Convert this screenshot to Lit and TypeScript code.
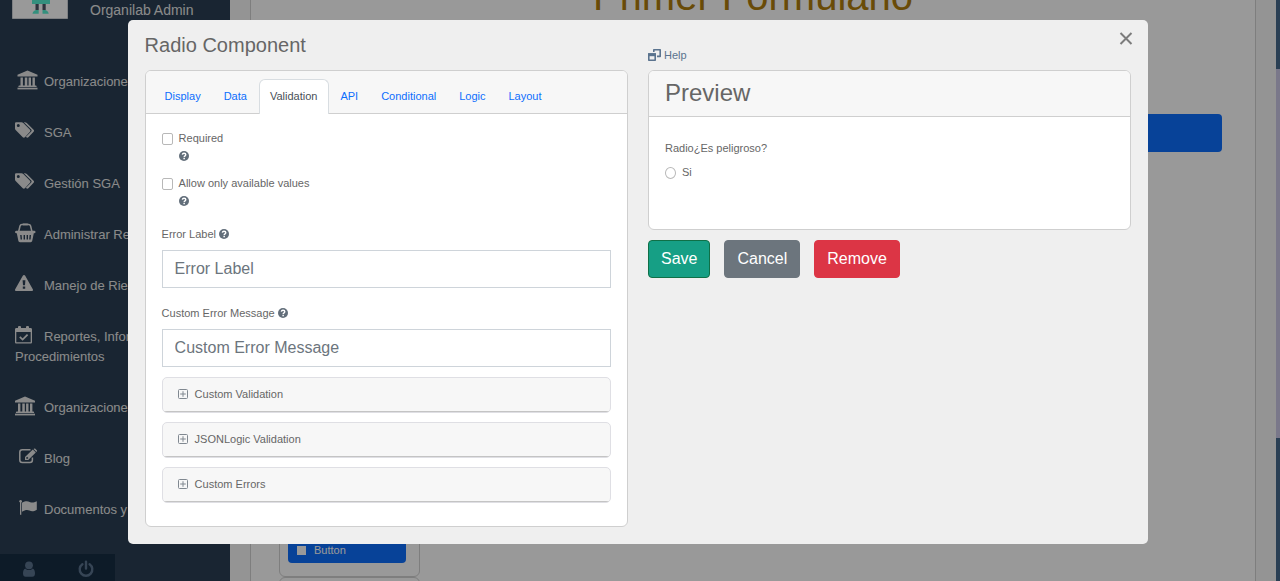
import { LitElement, html, svg, css } from "lit";
import { customElement, property } from "lit/decorators.js";
import { classMap } from "lit/directives/class-map.js";

const bank = svg`<path d="M10-.6 20 3.800V5.500H0V3.800Z"/><path d="M3 6.500h2.400v8.100h1.900V6.500h2.500v8.100h1.300V6.500h2.400v8.100h1.500V6.500H17.400v8.100h.9c.5 0 .8.4.8.9v.6H.9v-.6c0-.5.4-.9.9-.9H3Z"/><path d="M0 16.700h20v1.700H0Z"/>`;

const icons = {
  bank: svg`<g>${bank}</g>`,
  bankWide: svg`<g transform="translate(2.5 0)">${bank}</g>`,
  tags: svg`<path fill-rule="evenodd" d="M0 1.4C0 .7.6.2 1.3.2H6.4c.7 0 1.400.300 1.900.8l6.700 6.700c.6.6.6 1.500 0 2.100L9.900 15.200c-.6.6-1.500.6-2.100 0L.9 8.300C.4 7.800 0 7.100 0 6.400ZM3.300 2a1.500 1.500 0 1 0 0 3 1.500 1.500 0 0 0 0-3Z"/><path d="M8.800.2h1c.7 0 1.500.300 2 .8l6.800 6.700c.6.6.6 1.500 0 2.100l-5.200 5.400c-.7.7-1.500.6-2.100 0l-.4-.4 5.300-5.300c.5-.6.5-1.400 0-1.900Z"/>`,
  basket: svg`<path fill="none" stroke="currentColor" stroke-width="1.500" d="M3.700 7.500 5 2C5.300.8 6 .6 7 .6h6.600c1 0 1.700.2 2 1.400l1.300 5.500"/><path fill="none" stroke="currentColor" stroke-width="1.800" d="M7.800.4h5"/><path fill-rule="evenodd" d="M1.200 6.800h18.200c1.600 0 1.600 2.500 0 2.500h-.6l-1.500 7.300c-.2 1-.8 1.600-1.700 1.600H5c-.9 0-1.500-.6-1.700-1.600L1.800 9.300h-.6c-1.600 0-1.600-2.500 0-2.500ZM5.200 11l.4 4.500H7L6.600 11Zm3.400 0v4.500H10V11Zm3 0v4.500h1.400V11Zm3 0-.4 4.500h1.400l.4-4.500Z"/>`,
  warning: svg`<path fill-rule="evenodd" d="M9 0c.6 0 .9.200 1.200.7l7.600 13.600c.5.9-.1 1.700-1 1.700H1.200c-.9 0-1.500-.8-1-1.700L7.800.7C8.100.2 8.400 0 9 0ZM7.600 5.300 8 10.200h2l.4-4.900ZM7.800 11.500v2.200h2.400v-2.200Z"/>`,
  calendar: svg`<path fill-rule="evenodd" d="M1.400 2H3V.8C3-.2 6-.2 6 .8V2h5V.8c0-1 3-1 3 0V2h1.600c.8 0 1.400.6 1.400 1.400v12.800c0 .8-.6 1.400-1.400 1.400H1.400c-.8 0-1.400-.6-1.400-1.400V3.400C0 2.600.6 2 1.400 2ZM1.300 6v10.300h14.400V6Z"/><path fill="none" stroke="currentColor" stroke-width="1.700" d="m4.800 10.800 2.800 2.800 5-5"/>`,
  edit: svg`<path fill="none" stroke="currentColor" stroke-width="1.500" d="M15.500 1.800H7.300c-1.500 0-2.500 1-2.500 2.500v7.600c0 1.500 1 2.500 2.500 2.500h7.600c1.500 0 2.500-1 2.500-2.500V9.500"/><path fill-rule="evenodd" d="M10 9 17.800 1.600 20.800 4.600 13.200 12H10ZM11.300 9.600V10.800H12.700L13.400 10 12.100 8.700Z"/><path d="m18.500 1.100.6-.4c.4-.3.800-.3 1.200 0l1.500 1.500c.4.4.4.800 0 1.200l-.5.6Z"/>`,
  flag: svg`<circle cx="5.600" cy="2.300" r="1.300"/><path d="M5 2h1.300v13.800H5Z"/><path d="M7 3.800c4-2.300 5.500-1.800 8.200-.6 2 .9 4.200.2 6.600-1v8.600c-3.200 1.800-5 2-7.300.8-2.300-1.200-4.500-.6-7.500 1.100Z"/>`,
};

type IconName = keyof typeof icons;

@customElement("help-tip")
export class HelpTip extends LitElement {
  static styles = css`
    :host {
      display: inline-block;
      width: 10px;
      height: 10px;
      vertical-align: -1px;
    }
    .glyph {
      display: block;
      width: 10px;
      height: 10px;
    }
  `;

  render() {
    return html`<svg class="glyph" viewBox="0 0 10 10" role="img" aria-label="?">
      <circle cx="5" cy="5" r="5" fill="#626e7a" />
      <path fill="none" stroke="#fff" stroke-width="1.400" d="M3.300 3.700C3.500 2.700 4.200 2.300 5 2.300c1 0 1.800.6 1.800 1.500C6.800 4.900 5.200 4.800 5.200 6.100" />
      <path fill="#fff" d="M4.400 6.800h1.500v1.400H4.400Z" />
    </svg>`;
  }
}

@customElement("side-nav")
export class SideNav extends LitElement {
  static styles = css`
    :host {
      display: flex;
      flex-direction: column;
      position: relative;
      width: 230px;
      flex: none;
      background: #2a3f54;
      color: #e7e7e7;
      overflow: hidden;
    }
    .profile {
      display: flex;
      gap: 22px;
      padding-left: 12px;
      align-items: flex-start;
    }
    .avatar {
      display: block;
      width: 56px;
      height: 19px;
    }
    .name {
      font-size: 14px;
      line-height: 20px;
    }
    .menu {
      list-style: none;
      margin: 37px 0 0;
      padding: 0;
    }
    .link {
      display: block;
      padding: 15px 15px 16px;
      font-size: 13px;
      line-height: 20px;
      color: inherit;
      text-decoration: none;
    }
    .icon {
      width: 29px;
      height: 18px;
      vertical-align: -4px;
      overflow: visible;
      fill: currentColor;
    }
    .footer {
      position: absolute;
      left: 0;
      bottom: 0;
      display: flex;
      width: 50%;
      background: #172d44;
    }
    .tool {
      flex: 1;
      display: flex;
      justify-content: center;
      padding: 6px 0 3px;
      border: 0;
      background: none;
      color: #5a738e;
    }
    .toolicon {
      width: 18px;
      height: 18px;
      fill: currentColor;
    }
  `;

  private entries: { icon: IconName; label: string }[] = [
    { icon: "bankWide", label: "Organizaciones" },
    { icon: "tags", label: "SGA" },
    { icon: "tags", label: "Gestión SGA" },
    { icon: "basket", label: "Administrar Reactivos" },
    { icon: "warning", label: "Manejo de Riesgos" },
    { icon: "calendar", label: "Reportes, Informes y Procedimientos" },
    { icon: "bank", label: "Organizaciones" },
    { icon: "edit", label: "Blog" },
    { icon: "flag", label: "Documentos y normas" },
  ];

  render() {
    return html`
      <div class="profile">
        <svg class="avatar" viewBox="0 0 56 19" aria-hidden="true">
          <path fill="#fff" stroke="#d3d6da" d="M.5-1V18.500H55.500V-1" />
          <path fill="#58f0d2" d="M20 0H38V4H20Z" />
          <path fill="#4c5666" d="M23.500 4h3.200v6h-3.200ZM30.500 4h3.200v6h-3.200Z" />
          <path fill="#58f0d2" d="M20.500 13.700c0-2 2-3 3.500-3.700h2.700v3.700ZM30.500 10h2.700c1.500.7 3.500 1.700 3.500 3.700h-6.200Z" />
        </svg>
        <span class="name">Organilab Admin</span>
      </div>
      <ul class="menu">
        ${this.entries.map(
          (e) => html`<li><a class="link" href="#"><svg class="icon" viewBox="0 1 29 18" aria-hidden="true">${icons[e.icon]}</svg>${e.label}</a></li>`
        )}
      </ul>
      <div class="footer">
        <button class="tool" aria-label="Perfil">
          <svg class="toolicon" viewBox="0 0 18 18"><circle cx="9" cy="5.300" r="3.900" /><path d="M5.300 8.400C3.500 9.200 3 11.500 3 13.500 3 15.500 4 16.800 5.700 16.800h6.600c1.700 0 2.700-1.300 2.700-3.300 0-2-.5-4.300-2.300-5.100-2 2-5.400 2-7.400 0Z" /></svg>
        </button>
        <button class="tool" aria-label="Salir">
          <svg class="toolicon" viewBox="0 0 18 18"><path fill="none" stroke="currentColor" stroke-width="2.400" stroke-linecap="round" d="M5.400 4.300a6.300 6.300 0 1 0 7.200 0M9 1.600v7" /></svg>
        </button>
      </div>
    `;
  }
}

@customElement("form-builder")
export class FormBuilder extends LitElement {
  static styles = css`
    :host {
      display: block;
      flex: 1;
      min-width: 0;
      padding: 0 20px;
      background: #f7f7f7;
      overflow: hidden;
    }
    .panel {
      min-height: 100%;
      box-sizing: border-box;
      padding: 0 33px 0 28px;
      border: 1px solid #d2d2d2;
      border-width: 0 1px;
      background: #fff;
    }
    .heading {
      margin: -28px -33px 0 -28px;
      text-align: center;
      font-size: 40px;
      font-weight: 400;
      line-height: 48px;
      color: #b07d0c;
    }
    .columns {
      display: flex;
      gap: 20px;
      padding-top: 94px;
      align-items: flex-start;
    }
    .palette {
      width: 141px;
      flex: none;
      box-sizing: border-box;
    }
    .group {
      box-sizing: border-box;
      padding: 8px 13px 13px 8px;
      border: 1px solid #d2d2d2;
      border-radius: 6px;
      height: 463px;
      display: flex;
      align-items: flex-end;
    }
    .component {
      display: flex;
      align-items: center;
      gap: 8px;
      width: 100%;
      height: 26px;
      padding: 0 9px;
      border: 0;
      border-radius: 4px;
      background: #0d6efd;
      color: #fff;
      font: 11px/16px "Liberation Sans", Arial, sans-serif;
    }
    .square {
      width: 9px;
      height: 9px;
      background: #fff;
    }
    .submit {
      flex: 1;
      height: 38px;
      border: 0;
      border-radius: 4px;
      background: #0d6efd;
      color: #fff;
      font: 16px/24px "Liberation Sans", Arial, sans-serif;
    }
  `;

  render() {
    return html`
      <div class="panel">
        <h1 class="heading">Primer Formulario</h1>
        <div class="columns">
          <div class="palette">
            <div class="group">
              <button class="component"><span class="square"></span>Button</button>
            </div>
            <div class="group"></div>
          </div>
          <button class="submit">Submit</button>
        </div>
      </div>
    `;
  }
}

@customElement("component-dialog")
export class ComponentDialog extends LitElement {
  @property() active = "Validation";

  static styles = css`
    :host {
      display: block;
      position: relative;
      box-sizing: border-box;
      width: 80%;
      padding: 13px 17px 17px;
      border-radius: 5px;
      background: #efefef;
      color: #666;
      font-size: 11px;
      line-height: 17px;
    }
    .top,
    .columns {
      display: grid;
      grid-template-columns: 1fr 1fr;
      column-gap: 20px;
    }
    .columns {
      align-items: start;
    }
    .top {
      height: 32px;
      margin-bottom: 5px;
    }
    .title {
      margin: 0;
      font-size: 20px;
      line-height: 24px;
      font-weight: 400;
    }
    .help {
      display: flex;
      align-items: center;
      align-self: end;
      justify-self: start;
      gap: 3px;
      line-height: 20px;
      color: #5a738e;
      text-decoration: none;
    }
    .helpicon {
      width: 13px;
      height: 12px;
    }
    .close {
      position: absolute;
      top: 10px;
      right: 14px;
      padding: 0;
      border: 0;
      background: none;
      width: 16px;
      height: 16px;
    }
    .cross {
      display: block;
      width: 16px;
      height: 16px;
    }
    .card {
      border: 1px solid #cfcfcf;
      border-radius: 6px;
      background: #fff;
      overflow: hidden;
    }
    .tabs {
      display: flex;
      padding: 8px 8px 0;
      border-bottom: 1px solid #cfcfcf;
      background: #f7f7f7;
    }
    .tab {
      margin-bottom: -1px;
      padding: 8px 11px 9px 10px;
      border: 1px solid transparent;
      border-bottom: 0;
      border-radius: 6px 6px 0 0;
      color: #0d6efd;
      text-decoration: none;
    }
    .tab.active {
      border-color: #d8dde1;
      background: #fff;
      color: #495057;
    }
    .body {
      padding: 16px 16px 23px;
    }
    .checks {
      display: grid;
      gap: 11px;
      margin-bottom: 17px;
    }
    .check {
      display: grid;
      grid-template-columns: 11px 1fr;
      column-gap: 6px;
    }
    .check help-tip {
      grid-column: 2;
      margin: 4px 0 3px;
    }
    .box {
      appearance: none;
      box-sizing: border-box;
      flex: none;
      width: 11px;
      height: 12px;
      margin: 3px 0 0;
      border: 1px solid #b8b8b8;
      border-radius: 2px;
      background: #fff;
    }
    .box.round {
      border-radius: 50%;
    }
    .field {
      display: flex;
      flex-direction: column;
      gap: 7px;
      margin-bottom: 17px;
    }
    .field.last {
      margin-bottom: 10px;
    }
    .text {
      box-sizing: border-box;
      width: 100%;
      height: 38px;
      padding: 6px 12px;
      border: 1px solid #ced4da;
      border-radius: 0;
      background: #fff;
      color: #495057;
      font: 16px/24px "Liberation Sans", Arial, sans-serif;
    }
    .text::placeholder {
      color: #6c757d;
      opacity: 1;
    }
    .panels {
      display: grid;
      gap: 9px;
    }
    .panel {
      border: 1px solid #dfdfe4;
      border-radius: 5px;
      background: #f7f7f7;
      overflow: hidden;
    }
    .toggle {
      display: flex;
      align-items: center;
      gap: 7px;
      width: 100%;
      padding: 8px 15px;
      border: 0;
      border-bottom: 1px solid #c4c4c4;
      background: none;
      color: #666;
      font: inherit;
    }
    .plus {
      width: 10px;
      height: 10px;
      margin-bottom: 2px;
      fill: none;
      stroke: #808890;
    }
    .previewtitle {
      margin: 0;
      padding: 7px 16px 9px;
      border-bottom: 1px solid #cfcfcf;
      background: #f7f7f7;
      font-size: 24px;
      line-height: 29px;
      font-weight: 400;
    }
    .previewbody {
      padding: 23px 16px 48px;
    }
    .option {
      display: flex;
      gap: 6px;
      margin-top: 7px;
    }
    .actions {
      display: flex;
      gap: 14px;
      margin-top: 10px;
    }
    .btn {
      height: 38px;
      padding: 0 12px;
      border: 1px solid transparent;
      border-radius: 4px;
      color: #fff;
      font: 16px/24px "Liberation Sans", Arial, sans-serif;
    }
    .save {
      background: #169f85;
      border-color: #0f7047;
    }
    .cancel {
      background: #6c757d;
      border-color: #6c757d;
    }
    .remove {
      background: #dc3545;
      border-color: #dc3545;
    }
  `;

  render() {
    const tabs = ["Display", "Data", "Validation", "API", "Conditional", "Logic", "Layout"];
    const panels = ["Custom Validation", "JSONLogic Validation", "Custom Errors"];
    return html`
      <div class="top">
        <h2 class="title">Radio Component</h2>
        <a class="help" href="#">
          <svg class="helpicon" viewBox="0 0 13 12" aria-hidden="true">
            <path fill="none" stroke="#5a738e" stroke-width="1.600" stroke-linejoin="round" d="M5.800 3V.8H12.200V7.400H9M.8 5H7.200V11.200H.8Z" />
            <path fill="#5a738e" d="M0 4.200H8V7.200H0Z" />
          </svg>Help</a>
      </div>
      <div class="columns">
        <section class="card">
          <nav class="tabs">
            ${tabs.map((t) => html`<a href="#" class=${classMap({ tab: true, active: t === this.active })} @click=${() => (this.active = t)}>${t}</a>`)}
          </nav>
          <div class="body">
            <div class="checks">
              <div class="check">
                <input class="box" type="checkbox" id="required" /><label for="required">Required</label>
                <help-tip></help-tip>
              </div>
              <div class="check">
                <input class="box" type="checkbox" id="available" /><label for="available">Allow only available values</label>
                <help-tip></help-tip>
              </div>
            </div>
            <div class="field">
              <label for="error-label">Error Label <help-tip></help-tip></label>
              <input class="text" id="error-label" type="text" placeholder="Error Label" />
            </div>
            <div class="field last">
              <label for="error-message">Custom Error Message <help-tip></help-tip></label>
              <input class="text" id="error-message" type="text" placeholder="Custom Error Message" />
            </div>
            <div class="panels">
              ${panels.map(
                (p) => html`<div class="panel">
                  <button class="toggle" aria-expanded="false">
                    <svg class="plus" viewBox="0 0 10 10" aria-hidden="true"><rect x=".5" y=".5" width="9" height="9" rx="1" /><path d="M5 2.200v5.600M2.200 5h5.600" /></svg>${p}
                  </button>
                </div>`
              )}
            </div>
          </div>
        </section>
        <section>
          <div class="card">
            <h4 class="previewtitle">Preview</h4>
            <div class="previewbody">
              <div>Radio¿Es peligroso?</div>
              <div class="option">
                <input class="box round" type="radio" id="si" name="peligroso" /><label for="si">Si</label>
              </div>
            </div>
          </div>
          <div class="actions">
            <button class="btn save">Save</button>
            <button class="btn cancel">Cancel</button>
            <button class="btn remove">Remove</button>
          </div>
        </section>
      </div>
      <button class="close" aria-label="Close">
        <svg class="cross" viewBox="0 0 16 16"><path fill="none" stroke="#7c7c7c" stroke-width="2" d="M2.500 3 13.500 14M13.500 3 2.500 14" /></svg>
      </button>
    `;
  }
}

@customElement("app-root")
export class AppRoot extends LitElement {
  static styles = css`
    :host {
      display: flex;
      height: 100vh;
      overflow: hidden;
      font-family: "Liberation Sans", Arial, sans-serif;
    }
    .page {
      position: relative;
      display: flex;
      flex: 1;
      min-width: 0;
    }
    .overlay {
      position: absolute;
      inset: 0;
      display: flex;
      justify-content: center;
      align-items: flex-start;
      padding-top: 20px;
      background: rgba(0, 0, 0, 0.4);
    }
    .scrollbar {
      display: grid;
      grid-template-rows: 69fr 369fr 143fr;
      width: 4px;
      background: #2a3f54;
    }
    .thumb {
      grid-row: 2;
      background: #7a788a;
    }
  `;

  render() {
    return html`
      <div class="page">
        <side-nav></side-nav>
        <form-builder></form-builder>
        <div class="overlay">
          <component-dialog role="dialog" aria-modal="true"></component-dialog>
        </div>
      </div>
      <div class="scrollbar"><div class="thumb"></div></div>
    `;
  }
}
